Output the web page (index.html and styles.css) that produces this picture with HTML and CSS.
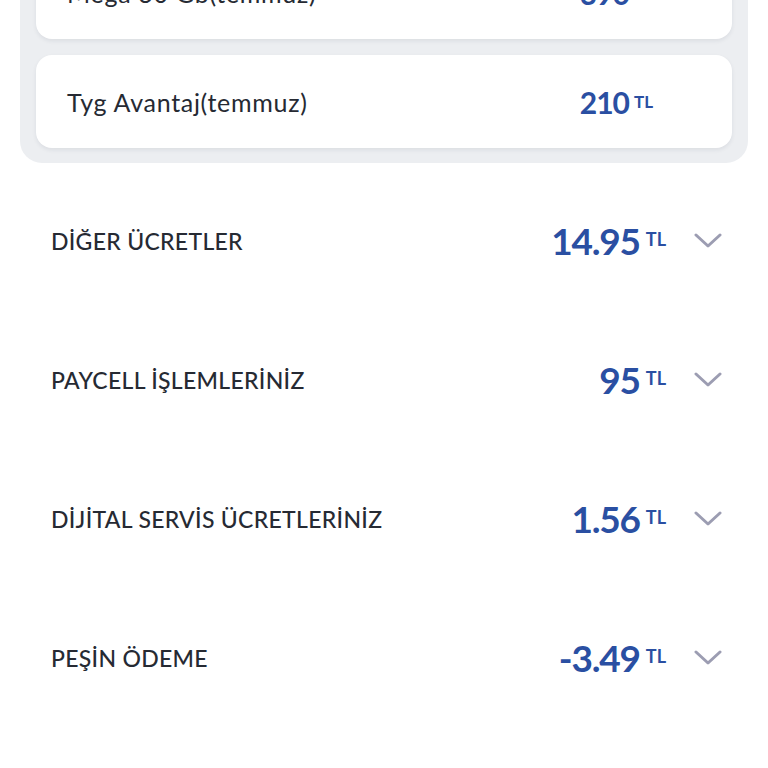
FILE: index.html
```html
<!DOCTYPE html>
<html lang="tr">
  <head>
    <meta charset="utf-8" />
    <title>Fatura Detayı</title>
    <link rel="stylesheet" href="styles.css">
  </head>

  <body>
    <div id="summary">
      <div class="card">
        <span class="card-name">Mega 30 Gb(temmuz)</span>
        <span class="card-price">390<small>TL</small></span>
      </div>
      <div class="card">
        <span class="card-name">Tyg Avantaj(temmuz)</span>
        <span class="card-price">210<small>TL</small></span>
      </div>
    </div>

    <ul id="charges">
      <li class="charge">
        <span class="charge-name">DİĞER ÜCRETLER</span>
        <span class="charge-price">14.95<small>TL</small></span>
        <svg class="chevron" viewBox="0 0 28 16"><path d="M2 2 L14 13 L26 2" /></svg>
      </li>
      <li class="charge">
        <span class="charge-name">PAYCELL İŞLEMLERİNİZ</span>
        <span class="charge-price">95<small>TL</small></span>
        <svg class="chevron" viewBox="0 0 28 16"><path d="M2 2 L14 13 L26 2" /></svg>
      </li>
      <li class="charge">
        <span class="charge-name">DİJİTAL SERVİS ÜCRETLERİNİZ</span>
        <span class="charge-price">1.56<small>TL</small></span>
        <svg class="chevron" viewBox="0 0 28 16"><path d="M2 2 L14 13 L26 2" /></svg>
      </li>
      <li class="charge">
        <span class="charge-name">PEŞİN ÖDEME</span>
        <span class="charge-price">-3.49<small>TL</small></span>
        <svg class="chevron" viewBox="0 0 28 16"><path d="M2 2 L14 13 L26 2" /></svg>
      </li>
    </ul>
  </body>
</html>
```

FILE: styles.css
```css
body {
  background-color: #fff;
  color: #262a33;
  font-family: Lato, "Open Sans", sans-serif;
  margin: 0;
  padding: 0;
}

#summary {
  margin: -74px 20px 0;
  padding: 20px 16px 15px;
  background-color: #eceef1;
  border-radius: 0 0 22px 22px;
  display: flex;
  flex-direction: column;
  gap: 16px;
}

.card {
  height: 93px;
  background-color: #fff;
  border-radius: 16px;
  box-shadow: 0 2px 4px rgba(30, 40, 60, 0.08);
  display: flex;
  align-items: center;
  padding: 0 79px 0 31px;
}

.card-name {
  flex: 1;
  font-size: 25px;
  letter-spacing: 0.7px;
}

.card-price {
  color: #2a4fa2;
  font-size: 30px;
  font-weight: 700;
  letter-spacing: -1px;
}

.card-price small {
  font-size: 17px;
  margin-left: 5px;
  letter-spacing: 0;
  vertical-align: 6px;
}

#charges {
  list-style: none;
  margin: 8px 0 0;
  padding: 0;
}

.charge {
  height: 139px;
  display: flex;
  align-items: center;
  padding: 0 46px 0 51px;
}

.charge-name {
  flex: 1;
  font-size: 23px;
  font-weight: 500;
  letter-spacing: 0.3px;
}

.charge-price {
  color: #2a4fa2;
  font-size: 37px;
  font-weight: 700;
  letter-spacing: -1.2px;
}

.charge-price small {
  font-size: 18px;
  margin-left: 6px;
  letter-spacing: 0;
  vertical-align: 9px;
}

.chevron {
  width: 28px;
  height: 16px;
  margin-left: 28px;
  fill: none;
  stroke: #9c9db2;
  stroke-width: 3;
  stroke-linecap: round;
  stroke-linejoin: round;
}
```
